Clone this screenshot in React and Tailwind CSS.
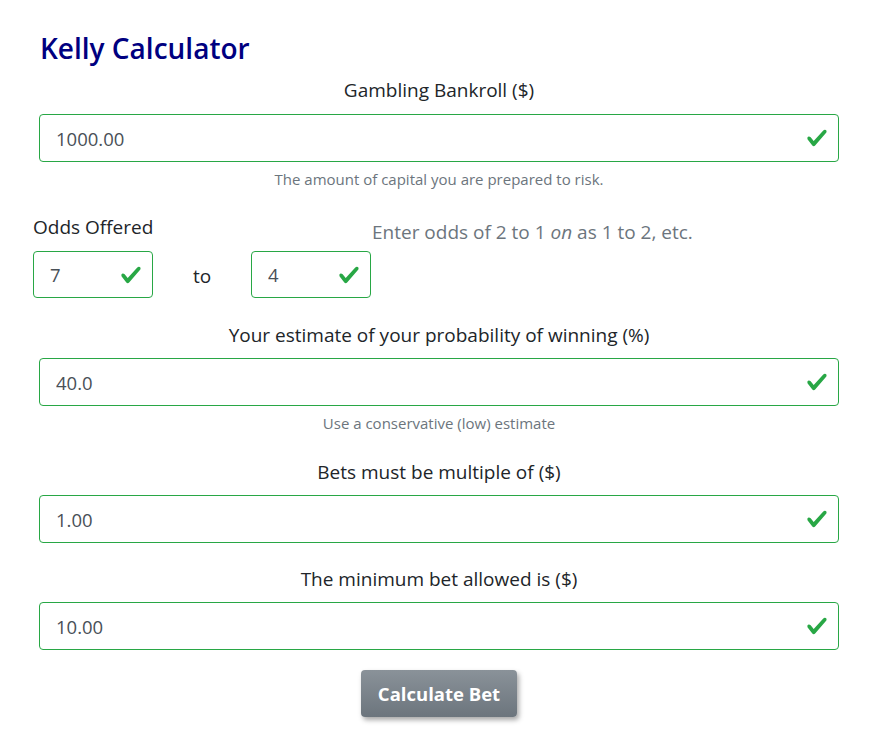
import React, { useState } from "react";

const font = { fontFamily: '"Open Sans", "Noto Sans", Arial, sans-serif' };

const Check = ({ className }) => (
  <svg viewBox="0 0 8 8" className={className}>
    <path
      fill="#28a745"
      d="M2.3 6.73L.6 4.53c-.4-1.04.46-1.4 1.1-.8l1.1 1.4 3.4-3.8c.6-.63 1.6-.27 1.2.7l-4 4.6c-.43.5-.8.4-1.1.1z"
    />
  </svg>
);

const Field = ({ value, onChange, className = "" }) => (
  <div className={`relative h-[48px] ${className}`}>
    <input
      value={value}
      onChange={(e) => onChange(e.target.value)}
      className="w-full h-full border border-[#28a745] rounded-[4px] pl-[16px] pr-[44px] text-[18.5px] text-[#495057] focus:outline-none"
    />
    <Check className="absolute right-[11px] top-[13px] w-[22px] h-[22px] pointer-events-none" />
  </div>
);

const Label = ({ children, className = "" }) => (
  <div className={`h-[27px] leading-[29px] text-center text-[19px] text-[#212529] ${className}`}>
    {children}
  </div>
);

const Help = ({ children, className = "" }) => (
  <div className={`h-[21px] leading-[21px] text-center text-[15px] text-[#6c757d] ${className}`}>
    {children}
  </div>
);

export default function App() {
  const [bankroll, setBankroll] = useState("1000.00");
  const [oddsA, setOddsA] = useState("7");
  const [oddsB, setOddsB] = useState("4");
  const [prob, setProb] = useState("40.0");
  const [multiple, setMultiple] = useState("1.00");
  const [minBet, setMinBet] = useState("10.00");

  return (
    <div className="min-h-screen bg-white" style={font}>
      <div className="ml-[39px] w-[800px] pt-[31px]">
        <h1 className="h-[34px] leading-[34px] pl-[1px] text-[28px] font-semibold text-[#000080]">
          Kelly Calculator
        </h1>

        <Label className="mt-[11px]">Gambling Bankroll ($)</Label>
        <Field value={bankroll} onChange={setBankroll} className="mt-[11px]" />
        <Help className="mt-[7px]">The amount of capital you are prepared to risk.</Help>

        <div className="flex -ml-[6px] mt-[23px]">
          <div className="w-[339px]">
            <div className="h-[27px] leading-[29px] text-[19px] text-[#212529]">Odds Offered</div>
            <div className="flex items-center mt-[11px]">
              <Field value={oddsA} onChange={setOddsA} className="w-[120px] !h-[47px]" />
              <div className="w-[98px] text-center text-[19px] text-[#212529] pt-[4px]">to</div>
              <Field value={oddsB} onChange={setOddsB} className="w-[120px] !h-[47px]" />
            </div>
          </div>
          <div className="pt-[5px] h-[27px] leading-[29px] text-[19px] text-[#6c757d]">
            Enter odds of 2 to 1 <em>on</em> as 1 to 2, etc.
          </div>
        </div>

        <Label className="mt-[23px]">Your estimate of your probability of winning (%)</Label>
        <Field value={prob} onChange={setProb} className="mt-[10px]" />
        <Help className="mt-[7px]">Use a conservative (low) estimate</Help>

        <Label className="mt-[24px]">Bets must be multiple of ($)</Label>
        <Field value={multiple} onChange={setMultiple} className="mt-[10px]" />

        <Label className="mt-[22px]">The minimum bet allowed is ($)</Label>
        <Field value={minBet} onChange={setMinBet} className="mt-[10px]" />

        <div className="flex justify-center mt-[20px]">
          <button className="w-[156px] h-[47px] rounded-[4px] bg-gradient-to-b from-[#8a9299] to-[#6c757d] text-white font-bold text-[18.5px] shadow-[2px_3px_5px_rgba(0,0,0,0.35)]">
            Calculate Bet
          </button>
        </div>
      </div>
    </div>
  );
}
